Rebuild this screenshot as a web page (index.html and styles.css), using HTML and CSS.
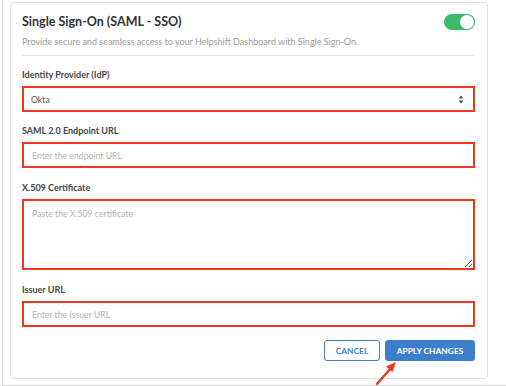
FILE: index.html
```html
<!DOCTYPE html>
<html lang="en">
<head>
    <meta charset="UTF-8">
    <title>Single Sign-On (SAML - SSO)</title>
    <link rel="stylesheet" href="styles.css">
</head>
<body>
    <div class="frame">
        <div class="card">
            <!-- Header -->
            <div class="card-header">
                <h1 class="title">Single Sign-On (SAML - SSO)</h1>
                <span class="toggle"><span class="toggle-knob"></span></span>
            </div>
            <p class="subtitle">Provide secure and seamless access to your Helpshift Dashboard with Single Sign-On.</p>

            <!-- Form fields -->
            <div class="field">
                <label class="field-label">Identity Provider (IdP)</label>
                <div class="select-box">
                    <span>Okta</span>
                    <span class="select-arrows">
                        <svg width="6" height="9" viewBox="0 0 6 9"><path d="M3 0.5 L5.5 3.5 H0.5 Z M3 8.5 L5.5 5.5 H0.5 Z" fill="#555"/></svg>
                    </span>
                </div>
            </div>

            <div class="field">
                <label class="field-label">SAML 2.0 Endpoint URL</label>
                <input class="text-input" type="text" placeholder="Enter the endpoint URL">
            </div>

            <div class="field field-wide">
                <label class="field-label">X.509 Certificate</label>
                <textarea class="text-area" placeholder="Paste the X.509 certificate"></textarea>
            </div>

            <div class="field field-wide">
                <label class="field-label">Issuer URL</label>
                <input class="text-input" type="text" placeholder="Enter the Issuer URL">
            </div>

            <div class="actions">
                <button class="btn btn-outline">Cancel</button>
                <button class="btn btn-primary">Apply Changes</button>
            </div>
        </div>

        <!-- annotation arrow pointing at the apply button -->
        <svg class="pointer-arrow" width="24" height="26" viewBox="0 0 24 26">
            <path d="M2 25 L16 9" stroke="#f2361d" stroke-width="2.4" stroke-linecap="round"/>
            <path d="M21 3 L11 7.5 L17.5 13 Z" fill="#f2361d"/>
        </svg>
    </div>
</body>
</html>
```

FILE: styles.css
```css
/* Basic page styles */
body, html {
    margin: 0;
    padding: 0;
    background-color: #ffffff;
    font-family: Lato, "Open Sans", sans-serif;
}

.frame {
    position: relative;
    margin-left: 2px;
    width: 504px;
    height: 377px;
    padding: 2px 0 6px 7px;
    border-left: 1px solid #d6d6d6;
    border-bottom: 1px solid #d6d6d6;
    box-sizing: content-box;
}

.card {
    width: 478px;
    height: 377px;
    padding: 0 12px 0 11px;
    box-sizing: border-box;
    border: 1px solid #e2e2e2;
    border-radius: 4px;
    display: flex;
    flex-direction: column;
}

.card-header {
    display: flex;
    justify-content: space-between;
    align-items: center;
    margin-top: 10px;
    height: 18px;
}

.title {
    margin: 0;
    font-size: 12.5px;
    font-weight: bold;
    color: #333333;
    line-height: 18px;
}

.toggle {
    width: 31px;
    height: 16px;
    border-radius: 8px;
    background-color: #3dbb6c;
    display: flex;
    justify-content: flex-end;
    align-items: center;
    padding: 1px;
    box-sizing: border-box;
}

.toggle-knob {
    width: 14px;
    height: 14px;
    border-radius: 50%;
    background-color: #ffffff;
}

.subtitle {
    margin: 3px 0 0 0;
    padding: 1px 0 6px 0;
    font-size: 9px;
    line-height: 14px;
    color: #9b9b9b;
    border-bottom: 1px solid #e4e4e4;
}

.field {
    display: flex;
    flex-direction: column;
    margin-top: 12px;
}

.field-wide {
    margin-top: 13px;
}

.field-label {
    font-size: 9px;
    font-weight: bold;
    line-height: 14px;
    color: #454545;
    margin-bottom: 4px;
}

.select-box,
.text-input,
.text-area {
    border: 2px solid #f2361d;
    background-color: #ffffff;
    font-family: Lato, "Open Sans", sans-serif;
    font-size: 8.7px;
    color: #555555;
    box-sizing: border-box;
    width: 100%;
    margin: 0;
    outline: none;
}

.select-box {
    height: 26px;
    display: flex;
    justify-content: space-between;
    align-items: center;
    padding: 0 9px 0 7px;
}

.select-arrows {
    display: flex;
}

.text-input {
    height: 26px;
    padding: 0 8px;
}

.text-area {
    height: 71px;
    padding: 7px 8px;
    resize: vertical;
}

.text-input::placeholder,
.text-area::placeholder {
    color: #b4b4b4;
}

.actions {
    display: flex;
    justify-content: flex-end;
    gap: 5px;
    margin-top: 13px;
}

.btn {
    height: 21px;
    padding: 0;
    font-family: Lato, "Open Sans", sans-serif;
    font-size: 8.4px;
    font-weight: bold;
    text-transform: uppercase;
    white-space: nowrap;
    border-radius: 3px;
    cursor: pointer;
}

.btn-outline {
    width: 56px;
    background-color: #ffffff;
    color: #3f7fc8;
    border: 1px solid #3f7fc8;
}

.btn-primary {
    width: 90px;
    background-color: #3d7ecb;
    color: #ffffff;
    border: 1px solid #3d7ecb;
}

.pointer-arrow {
    position: absolute;
    left: 372px;
    top: 359px;
}
```
